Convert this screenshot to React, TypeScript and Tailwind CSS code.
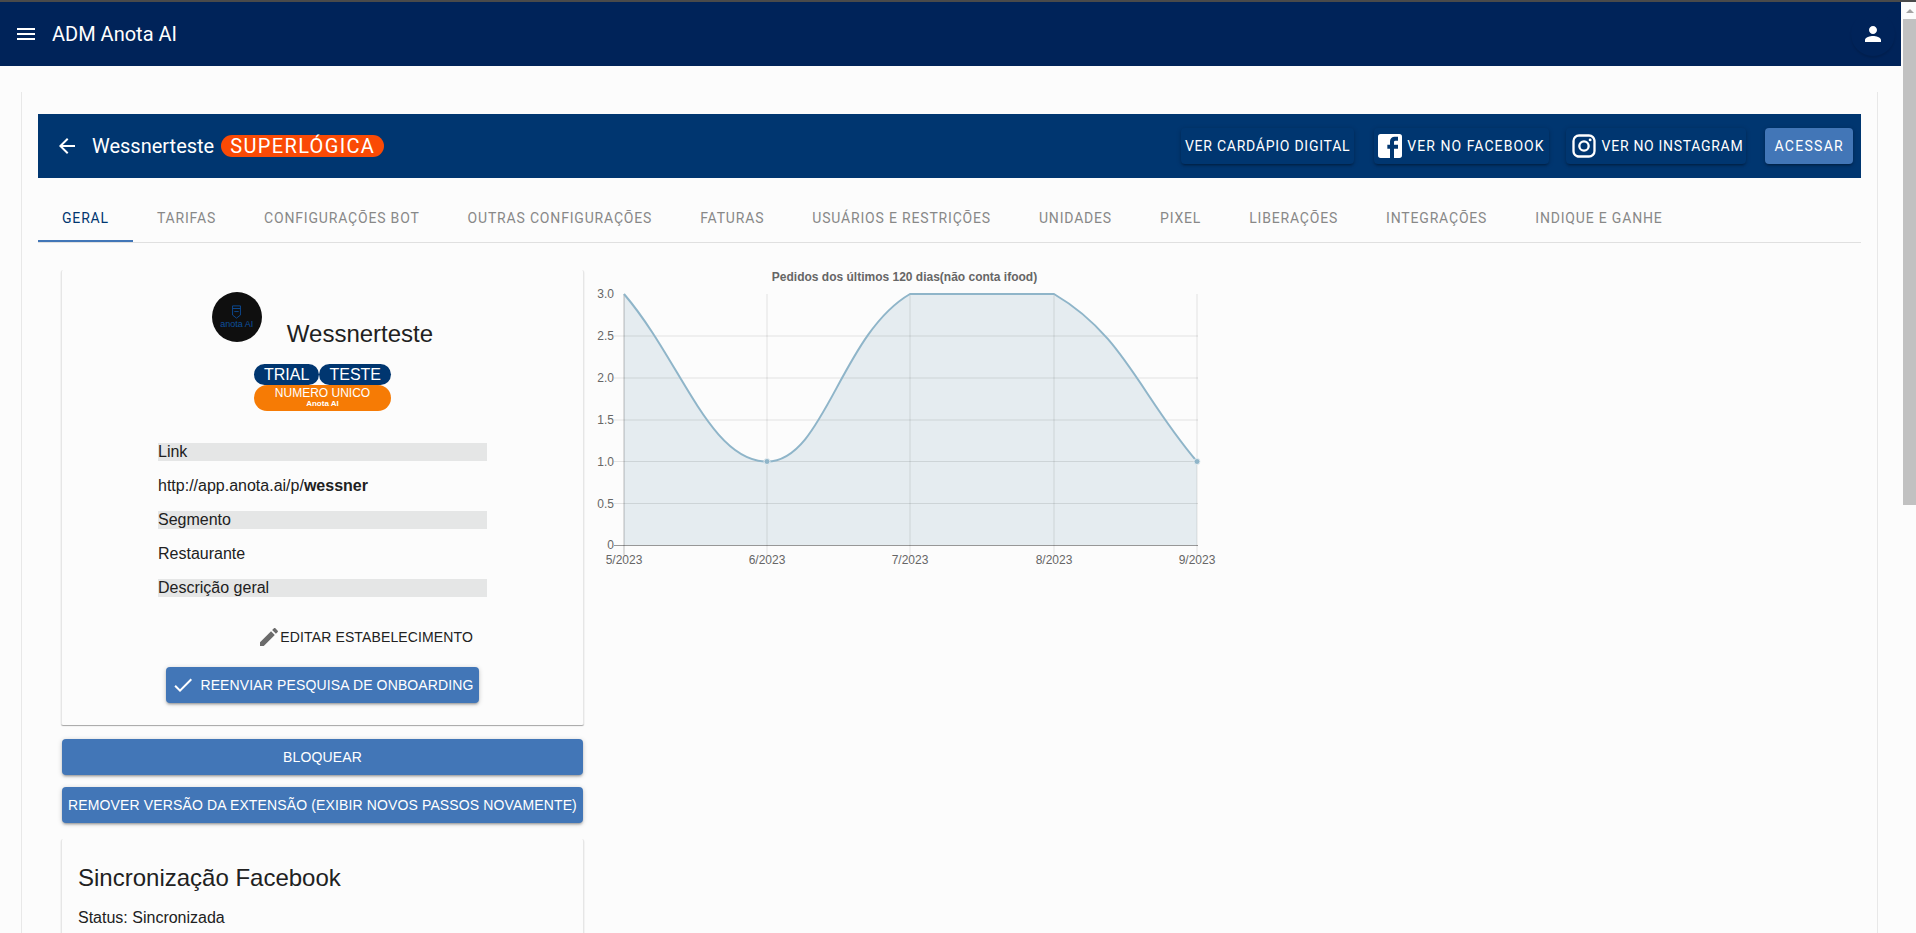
import type { ReactNode } from 'react'

const tabs = [
  'Geral',
  'Tarifas',
  'Configurações Bot',
  'Outras Configurações',
  'Faturas',
  'Usuários e Restrições',
  'Unidades',
  'Pixel',
  'Liberações',
  'Integrações',
  'Indique e Ganhe',
]

const raised =
  'shadow-[0_1px_5px_rgba(0,0,0,0.2),0_2px_2px_rgba(0,0,0,0.14),0_3px_1px_-2px_rgba(0,0,0,0.12)]'
const paper = 'border-x border-[#e6e6e6] shadow-[0_1px_1px_rgba(0,0,0,0.35)]'

function Icon({ d, className }: { d: string; className?: string }) {
  return (
    <svg viewBox="0 0 24 24" fill="currentColor" className={className}>
      <path d={d} />
    </svg>
  )
}

const icons = {
  menu: 'M3 18h18v-2H3v2zm0-5h18v-2H3v2zm0-7v2h18V6H3z',
  back: 'M20 11H7.83l5.59-5.59L12 4l-8 8 8 8 1.41-1.41L7.83 13H20v-2z',
  person:
    'M12 12c2.21 0 4-1.79 4-4s-1.79-4-4-4-4 1.79-4 4 1.79 4 4 4zm0 2c-2.67 0-8 1.34-8 4v2h16v-2c0-2.66-5.33-4-8-4z',
  edit: 'M3 17.25V21h3.75L17.81 9.94l-3.75-3.75L3 17.25zM20.71 7.04c.39-.39.39-1.02 0-1.41l-2.34-2.34c-.39-.39-1.02-.39-1.41 0l-1.83 1.83 3.75 3.75 1.83-1.83z',
  check: 'M9 16.17L4.83 12l-1.42 1.41L9 19 21 7l-1.41-1.41z',
  facebook:
    'M5 3h14a2 2 0 0 1 2 2v14a2 2 0 0 1-2 2H5a2 2 0 0 1-2-2V5a2 2 0 0 1 2-2m13 2h-2.5A3.5 3.5 0 0 0 12 8.5V11h-2v3h2v7h3v-7h3v-3h-3V9a1 1 0 0 1 1-1h2V5z',
  instagram:
    'M7.8 2h8.4C19.4 2 22 4.6 22 7.8v8.4a5.8 5.8 0 0 1-5.8 5.8H7.8C4.6 22 2 19.4 2 16.2V7.8A5.8 5.8 0 0 1 7.8 2m-.2 2A3.6 3.6 0 0 0 4 7.6v8.8C4 18.39 5.61 20 7.6 20h8.8a3.6 3.6 0 0 0 3.6-3.6V7.6C20 5.61 18.39 4 16.4 4H7.6m9.65 1.5a1.25 1.25 0 0 1 1.25 1.25A1.25 1.25 0 0 1 17.25 8 1.25 1.25 0 0 1 16 6.75a1.25 1.25 0 0 1 1.25-1.25M12 7a5 5 0 0 1 5 5 5 5 0 0 1-5 5 5 5 0 0 1-5-5 5 5 0 0 1 5-5m0 2a3 3 0 0 0-3 3 3 3 0 0 0 3 3 3 3 0 0 0 3-3 3 3 0 0 0-3-3z',
}

function BarButton({ children, className = '' }: { children: ReactNode; className?: string }) {
  return (
    <button
      type="button"
      className={`flex h-9 items-center rounded text-sm whitespace-nowrap text-white uppercase ${raised} ${className}`}
    >
      {children}
    </button>
  )
}

function PrimaryButton({ children, className = '' }: { children: ReactNode; className?: string }) {
  return (
    <button
      type="button"
      className={`flex h-9 items-center justify-center rounded bg-[#4276b7] text-sm tracking-[0.13px] whitespace-nowrap text-white uppercase ${raised} ${className}`}
    >
      {children}
    </button>
  )
}

function Logo() {
  return (
    <div className="flex size-[50px] shrink-0 flex-col items-center justify-center rounded-full bg-[#0f0f0f] text-[#0d4f9e]">
      <svg viewBox="0 0 12 16" fill="none" stroke="currentColor" strokeWidth="1" className="h-[14px] w-[11px]">
        <path d="M1.5 1h9v10.500L6 15l-4.500-3.500z" />
        <path d="M1.500 4h9M3.500 7.500h5" />
      </svg>
      <span className="font-['Liberation_Sans',sans-serif] text-[9px] leading-[10px]">anota AI</span>
    </div>
  )
}

function OrdersChart() {
  const yTicks = [
    { label: '3.0', y: 38 },
    { label: '2.5', y: 80 },
    { label: '2.0', y: 122 },
    { label: '1.5', y: 164 },
    { label: '1.0', y: 205.500 },
    { label: '0.5', y: 247.500 },
    { label: '0', y: 289 },
  ]
  const xTicks = [
    { label: '5/2023', x: 40 },
    { label: '6/2023', x: 183 },
    { label: '7/2023', x: 326 },
    { label: '8/2023', x: 470 },
    { label: '9/2023', x: 613 },
  ]
  const curve =
    'M40 38C97.200 105 125.800 205.500 183 205.500C240.200 205.500 256.500 78.600 326 38C371.300 38 424.700 38 470 38C539.500 78.600 555.800 138.600 613 205.500'

  return (
    <svg width="660" height="320" className="shrink-0 font-['Liberation_Sans',sans-serif]">
      <text x="320.500" y="24.500" textAnchor="middle" fontSize="12" fontWeight="700" fill="#666">
        Pedidos dos últimos 120 dias(não conta ifood)
      </text>
      <path d={`${curve}L613 289L40 289Z`} fill="#e5ecf0" />
      {yTicks.map((t) => (
        <g key={t.label}>
          {t.label !== '3.0' && t.label !== '0' && (
            <line x1="30" x2="614" y1={t.y} y2={t.y} stroke="#000" strokeOpacity="0.1" />
          )}
          <text x="30" y={t.y + 4} textAnchor="end" fontSize="12" fill="#666">
            {t.label}
          </text>
        </g>
      ))}
      {xTicks.map((t) => (
        <g key={t.label}>
          <line x1={t.x} x2={t.x} y1="38" y2="299" stroke="#000" strokeOpacity={t.x === 40 ? 0.25 : 0.1} />
          <text x={t.x} y="308" textAnchor="middle" fontSize="12" fill="#666">
            {t.label}
          </text>
        </g>
      ))}
      <line x1="30" x2="614" y1="289.500" y2="289.500" stroke="#000" strokeOpacity="0.4" />
      <path d={curve} fill="none" stroke="#8fb5c9" strokeWidth="2" />
      <circle cx="183" cy="205.500" r="3" fill="#8fb5c9" stroke="#e5ecf0" />
      <circle cx="613" cy="205.500" r="3" fill="#8fb5c9" stroke="#e5ecf0" />
    </svg>
  )
}

export default function App() {
  return (
    <div className="flex h-[933px] overflow-hidden border-t-2 border-[#4a4a4a] bg-[#fcfcfc] font-['Roboto',sans-serif]">
      <div className="flex min-w-0 flex-1 flex-col">
        <header className="flex h-16 shrink-0 items-center bg-[#002359] pr-[6px] pl-[14px] text-white">
          <Icon d={icons.menu} className="size-6" />
          <span className="ml-[14px] text-xl">ADM Anota AI</span>
          <span className="ml-auto grid size-11 place-items-center rounded-full shadow-[0_2px_2px_rgba(0,0,0,0.12)]">
            <Icon d={icons.person} className="size-6" />
          </span>
        </header>

        <main className="mt-[26px] mr-[23px] ml-[21px] flex-1 border-x border-[#e8e8e8] px-4 pt-[22px]">
          <div className="flex h-16 items-center bg-[#003670] pr-[8px] pl-[17px] text-white">
            <Icon d={icons.back} className="size-6" />
            <span className="ml-[13px] text-xl">Wessnerteste</span>
            <span className="ml-[7px] rounded-full bg-[#fa4a05] px-[9px] text-xl leading-[22px] tracking-[1.35px] whitespace-nowrap">
              SUPERLÓGICA
            </span>
            <div className="ml-auto flex items-center gap-[19px]">
              <BarButton className="mr-[1px] px-1 tracking-[0.75px]">Ver cardápio digital</BarButton>
              <BarButton className="-mr-[2px] gap-[5px] px-1 tracking-[1.05px]">
                <Icon d={icons.facebook} className="-m-[4px] size-8" />
                Ver no Facebook
              </BarButton>
              <BarButton className="gap-[6px] pr-[3px] pl-[6px] tracking-[0.7px]">
                <Icon d={icons.instagram} className="-m-[2px] size-7" />
                Ver no Instagram
              </BarButton>
              <BarButton className="bg-[#4276b7] px-[9px] tracking-[1.3px]">Acessar</BarButton>
            </div>
          </div>

          <nav className="mt-4 flex h-[49px] border-b border-[#e0e0e0] text-sm tracking-[0.82px] text-[#888888] uppercase">
            {tabs.map((tab, i) => (
              <div
                key={tab}
                className={
                  i === 0
                    ? 'flex h-[48px] items-center border-b-2 border-[#4276b7] px-6 pt-[2px] text-[#003670]'
                    : 'flex h-[48px] items-center px-6'
                }
              >
                {tab}
              </div>
            ))}
          </nav>

          <div className="flex font-['Liberation_Sans',sans-serif] text-base text-[#212121]">
            <div className="mt-[27px] ml-[23px] flex w-[523px] shrink-0 flex-col">
              <section className={`flex h-[455px] flex-col items-center rounded-[2px] pt-[22px] ${paper}`}>
                <div className="flex h-[56px] items-end gap-[25px]">
                  <div className="self-start">
                    <Logo />
                  </div>
                  <span className="text-2xl leading-7">Wessnerteste</span>
                </div>

                <div className="mt-4 flex w-[137px] flex-col text-white">
                  <div className="flex justify-between">
                    <span className="rounded-full bg-[#003670] px-[10px] text-base leading-[21px]">TRIAL</span>
                    <span className="rounded-full bg-[#003670] px-[10px] text-base leading-[21px]">TESTE</span>
                  </div>
                  <div className="flex h-[26px] flex-col items-center rounded-full bg-[#f67b05] pt-[2px]">
                    <span className="text-xs leading-[12px]">NUMERO UNICO</span>
                    <span className="text-[8px] leading-[9px] font-bold">Anota AI</span>
                  </div>
                </div>

                <div className="mt-8 flex w-[329px] flex-col gap-4 leading-[18px]">
                  <div className="bg-[#e5e6e6]">Link</div>
                  <div>
                    http://app.anota.ai/p/<b>wessner</b>
                  </div>
                  <div className="bg-[#e5e6e6]">Segmento</div>
                  <div>Restaurante</div>
                  <div className="bg-[#e5e6e6]">Descrição geral</div>
                </div>

                <div className="mt-[22px] flex h-9 w-[313px] items-center justify-end pr-[6px] text-sm tracking-[0.13px]">
                  <Icon d={icons.edit} className="-mr-[1px] size-6 text-[#6b6b6b]" />
                  <span className="uppercase">Editar estabelecimento</span>
                </div>

                <PrimaryButton className="mt-3 w-[313px] gap-[5px]">
                  <Icon d={icons.check} className="size-6" />
                  Reenviar pesquisa de onboarding
                </PrimaryButton>
              </section>

              <PrimaryButton className="mx-[1px] mt-[14px]">Bloquear</PrimaryButton>
              <PrimaryButton className="mx-[1px] mt-3">
                Remover versão da extensão (exibir novos passos novamente)
              </PrimaryButton>

              <section className={`mt-4 rounded-[2px] px-4 pt-[25px] pb-6 ${paper}`}>
                <h2 className="text-2xl leading-7">Sincronização Facebook</h2>
                <p className="mt-[17px] leading-[18px]">Status: Sincronizada</p>
              </section>
            </div>

            <div className="mt-[13px]">
              <OrdersChart />
            </div>
          </div>
        </main>
      </div>

      <aside className="flex w-[15px] shrink-0 flex-col bg-[#fcfcfc] pl-[2px]">
        <div className="flex h-[17px] items-center justify-center">
          <span className="border-x-[4px] border-b-[4px] border-x-transparent border-b-[#a3a3a3]" />
        </div>
        <div className="h-[486px] bg-[#c1c1c1]" />
      </aside>
    </div>
  )
}
